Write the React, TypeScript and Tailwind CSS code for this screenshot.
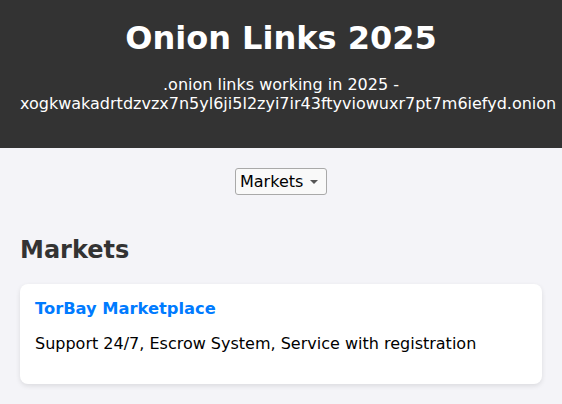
const links = [
  {
    name: 'TorBay Marketplace',
    description: 'Support 24/7, Escrow System, Service with registration',
  },
];

export default function App() {
  return (
    <div className="min-h-screen bg-[#f4f4f8] font-['DejaVu_Sans',sans-serif] text-[#333]">
      <header className="bg-[#333] p-5 text-center text-white">
        <h1 className="m-0 text-[32px] font-bold leading-[37px]">Onion Links 2025</h1>
        <p className="mt-[18px] mb-[15px] text-base leading-[19px]">
          .onion links working in 2025 - xogkwakadrtdzvzx7n5yl6ji5l2zyi7ir43ftyviowuxr7pt7m6iefyd.onion
        </p>
      </header>

      <main className="p-5">
        <div className="flex justify-center">
          <div className="flex h-[27px] w-[92px] items-center justify-between rounded-[3px] border border-[#a9a9a9] bg-[#f9f9f9] pl-[4px] pr-[8px] text-base text-black">
            <span>Markets</span>
            <svg width="8" height="4" viewBox="0 0 8 4" className="mt-[1px]">
              <path d="M0 0h8L4 4z" fill="#555" />
            </svg>
          </div>
        </div>

        <h2 className="mt-[41px] mb-[20px] text-2xl font-bold leading-7">Markets</h2>

        {links.map((l) => (
          <div key={l.name} className="rounded-lg bg-white p-[15px] shadow-[0_2px_5px_rgba(0,0,0,0.1)]">
            <h3 className="m-0 text-[16.3px] font-bold leading-5 text-[#007bff]">{l.name}</h3>
            <p className="mt-[15px] mb-4 text-base leading-[19px] text-black">{l.description}</p>
          </div>
        ))}
      </main>
    </div>
  );
}
